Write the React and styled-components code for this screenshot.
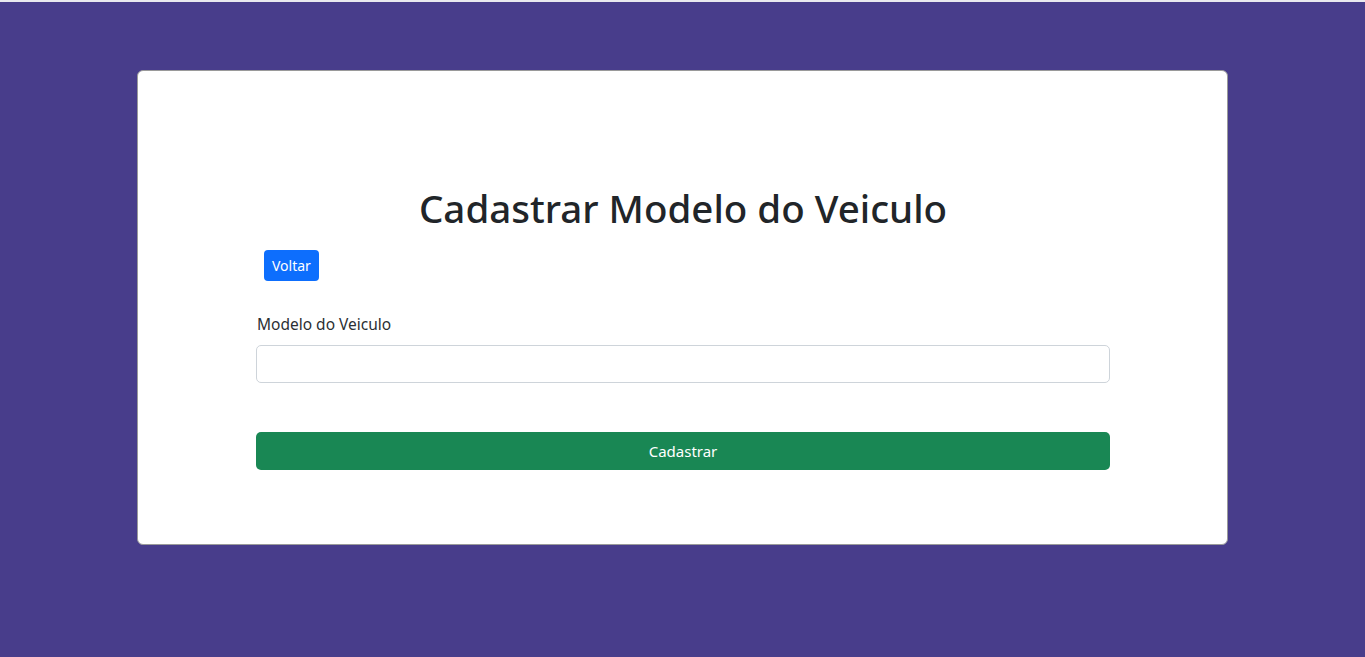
import React from "react";
import styled, { createGlobalStyle } from "styled-components";

const GlobalStyle = createGlobalStyle`
  * { box-sizing: border-box; }
  html, body {
    margin: 0;
    padding: 0;
    background-color: #483d8b;
    font-family: "Noto Sans", "Open Sans", sans-serif;
    color: #212529;
  }
`;

const Page = styled.div`
  min-height: 657px;
  border-top: 2px solid #e9e9ee;
  padding-top: 68px;
  display: flex;
  justify-content: center;
  align-items: flex-start;
`;

const Card = styled.div`
  width: 1091px;
  height: 475px;
  background-color: #fff;
  border: 1px solid #9a9a9a;
  border-radius: 6px;
  padding: 113px 117px 0 118px;
  display: flex;
  flex-direction: column;
`;

const Title = styled.h1`
  margin: 0 0 18px;
  font-size: 38.5px;
  font-weight: 500;
  line-height: 48px;
  text-align: center;
`;

const BackButton = styled.button`
  align-self: flex-start;
  margin-left: 8px;
  height: 31px;
  padding: 0 8px;
  font-family: inherit;
  font-size: 14px;
  color: #fff;
  background-color: #0d6efd;
  border: none;
  border-radius: 4px;
`;

const Form = styled.form`
  margin-top: 32px;
  display: flex;
  flex-direction: column;
`;

const Label = styled.label`
  font-size: 15.5px;
  line-height: 22px;
  margin: 0 0 10px 1px;
  color: #2b2f33;
`;

const Input = styled.input`
  height: 38px;
  border: 1px solid #ced4da;
  border-radius: 5px;
  padding: 6px 12px;
  font-size: 16px;
  font-family: inherit;
  outline: none;
`;

const SubmitButton = styled.button`
  margin-top: 49px;
  height: 38px;
  font-family: inherit;
  font-size: 15px;
  color: #fff;
  background-color: #198754;
  border: none;
  border-radius: 5px;
`;

const App = () => {
  return (
    <>
      <GlobalStyle />
      <Page>
        <Card>
          <Title>Cadastrar Modelo do Veiculo</Title>
          <BackButton type="button">Voltar</BackButton>
          <Form onSubmit={(e) => e.preventDefault()}>
            <Label htmlFor="modelo">Modelo do Veiculo</Label>
            <Input id="modelo" type="text" />
            <SubmitButton type="submit">Cadastrar</SubmitButton>
          </Form>
        </Card>
      </Page>
    </>
  );
};

export default App;
